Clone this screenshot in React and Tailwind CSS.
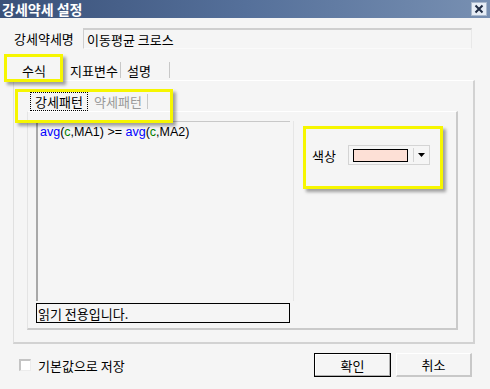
import React from "react";

const ko = { fontFamily: '"Noto Sans CJK KR", "Liberation Sans", sans-serif' };
const lat = { fontFamily: '"Liberation Sans", "Noto Sans CJK KR", sans-serif' };

// yellow annotation box laid over the dialog
const Mark = ({ className }) => (
  <div
    className={`absolute border-[3px] border-[#f6f600] shadow-[3px_3px_3px_rgba(0,0,0,0.35)] pointer-events-none ${className}`}
  />
);

export default function App() {
  return (
    <div
      className="relative w-[490px] h-[389px] bg-[#f5f5f5] overflow-hidden text-[13px] text-black flex flex-col"
      style={ko}
    >
      {/* title bar */}
      <div className="h-[18px] flex items-center justify-between pl-[2px] pr-[3px] bg-gradient-to-r from-[#3a5179] via-[#55709a] to-[#7890b2]">
        <span className="text-white font-bold text-[14px] leading-none">강세약세 설정</span>
        <div className="w-[16px] h-[14px] bg-[#e6edf6] border border-[#a9b8cc] flex items-center justify-center">
          <svg width="10" height="10" viewBox="0 0 10 10">
            <path d="M1.5 1.5 L8.5 8.5 M8.5 1.5 L1.5 8.5" stroke="#1f2c44" strokeWidth="2" />
          </svg>
        </div>
      </div>

      {/* name row */}
      <div className="mt-[10px] ml-[14px] flex items-center h-[21px]">
        <span className="w-[69px] leading-none">강세약세명</span>
        <div className="w-[389px] h-[21px] border-t-2 border-l border-[#cfcfcf] border-b border-b-[#fafafa] border-r border-r-[#e8e8e8] flex items-center pl-[3px] leading-none">
          이동평균 크로스
        </div>
      </div>

      {/* main tabs */}
      <div className="mt-[11px] ml-[13px] h-[20px] flex items-center leading-none">
        <span className="ml-[9px] w-[48px]">수식</span>
        <span className="w-[50px]">지표변수</span>
        <span className="w-px h-[16px] bg-[#c8c8c8]" />
        <span className="ml-[6px] w-[42px]">설명</span>
        <span className="w-px h-[16px] bg-[#c8c8c8]" />
      </div>

      {/* outer panel */}
      <div className="ml-[13px] w-[462px] h-[264px] border-t border-t-white border-l border-l-[#e0e0e0] border-r-2 border-r-[#d2d2d2] border-b-2 border-b-[#d2d2d2] flex flex-col">
        {/* sub tabs */}
        <div className="mt-[11px] ml-[16px] h-[19px] flex items-center leading-none">
          <span className="w-[58px] h-[19px] flex items-center justify-center border border-dotted border-black">강세패턴</span>
          <span className="ml-[6px] w-[53px] text-[#9a9a9a]">약세패턴</span>
          <span className="w-px h-[15px] bg-[#c8c8c8]" />
        </div>

        {/* inner panel */}
        <div className="ml-[13px] w-[431px] h-[219px] border-t border-t-white border-l border-l-[#e4e4e4] border-r-2 border-r-[#cacaca] border-b-2 border-b-[#cacaca] flex pl-[8px] pt-[9px]">
          <div className="w-[254px] flex flex-col">
            <div className="h-[180px] border-t border-t-[#c8c8c8] border-l-2 border-l-[#a8a8a8] pl-[2px] pt-[3px] leading-[14px] text-[12.5px]" style={lat}>
              <span className="text-[#0000ff]">avg</span>(<span className="text-[#008000]">c</span>,MA1) &gt;= <span className="text-[#0000ff]">avg</span>(<span className="text-[#008000]">c</span>,MA2)
            </div>
            <div className="mt-[2px] h-[20px] border border-black flex items-center pl-[1px] leading-none">
              읽기 전용입니다.
            </div>
          </div>
          <div className="ml-[3px] h-[180px] border-l border-l-[#e6e6e6] flex flex-col">
            <div className="mt-[24px] ml-[18px] flex items-center h-[20px]">
              <span className="w-[36px] leading-none">색상</span>
              <div className="w-[82px] h-[20px] border border-[#d4d4d4] flex items-center pl-[4px]">
                <div className="w-[55px] h-[13px] bg-[#fde0d6] border border-black" />
                <div className="ml-[5px] w-px h-[14px] bg-[#d4d4d4]" />
                <svg className="ml-[4px]" width="7" height="4" viewBox="0 0 7 4">
                  <path d="M0 0 H7 L3.5 4 Z" fill="#000" />
                </svg>
              </div>
            </div>
          </div>
        </div>
      </div>

      {/* bottom row */}
      <div className="mt-[9px] h-[24px] flex items-center">
        <div className="ml-[19px] w-[12px] h-[12px] bg-white border-t-2 border-l-2 border-[#c4c4c4] border-r border-b border-r-[#ececec] border-b-[#ececec]" />
        <span className="ml-[7px] leading-none">기본값으로 저장</span>
        <div className="flex-1" />
        <button className="w-[77px] h-[24px] border border-black bg-[#f5f5f5] shadow-[inset_-1px_-1px_0_#b0b0b0,inset_1px_1px_0_#ffffff] leading-none">
          확인
        </button>
        <button className="ml-[5px] mr-[18px] w-[76px] h-[24px] bg-[#f5f5f5] border-t border-l border-white border-r-2 border-b-2 border-r-[#c8c8c8] border-b-[#c8c8c8] leading-none">
          취소
        </button>
      </div>

      {/* annotations */}
      <Mark className="left-[4px] top-[54px] w-[59px] h-[28px]" />
      <Mark className="left-[15px] top-[89px] w-[158px] h-[34px]" />
      <Mark className="left-[303px] top-[126px] w-[140px] h-[63px]" />
    </div>
  );
}
